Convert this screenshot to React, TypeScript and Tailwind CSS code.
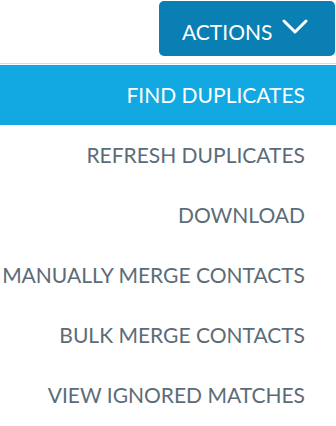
import React from "react";

// Menu entries under the Actions button
const menuItems = [
  "FIND DUPLICATES",
  "REFRESH DUPLICATES",
  "DOWNLOAD",
  "MANUALLY MERGE CONTACTS",
  "BULK MERGE CONTACTS",
  "VIEW IGNORED MATCHES",
];

export default function App() {
  const active = "FIND DUPLICATES";

  return (
    <div className="h-[426px] w-[336px] overflow-hidden bg-white font-['Lato',sans-serif]">
      {/* Actions button */}
      <div className="flex justify-end pr-[1px] pt-[1px]">
        <button className="flex h-[55px] w-[176px] items-center rounded-[5px] bg-[#0a7fb4] pl-[23px] text-white">
          <span className="pt-[5px] text-[21px] leading-none">ACTIONS</span>
          <svg
            width="26"
            height="16"
            viewBox="0 0 26 16"
            fill="none"
            stroke="currentColor"
            strokeWidth="3"
            strokeLinecap="round"
            strokeLinejoin="round"
            className="ml-[10px] -mt-[3px]"
          >
            <polyline points="2 2 13 13 24 2"></polyline>
          </svg>
        </button>
      </div>

      {/* Dropdown list */}
      <div className="mt-[7px] border-t border-[#dcdcdc] pt-[1px]">
        {menuItems.map((item) => {
          const isActive = item === active;
          return (
            <div
              key={item}
              className={`flex h-[60px] items-center justify-end whitespace-nowrap pr-[31px] text-[21px] ${
                isActive ? "bg-[#12a8e2] text-white" : "text-[#5b6c78]"
              }`}
            >
              {item}
            </div>
          );
        })}
      </div>
    </div>
  );
}
